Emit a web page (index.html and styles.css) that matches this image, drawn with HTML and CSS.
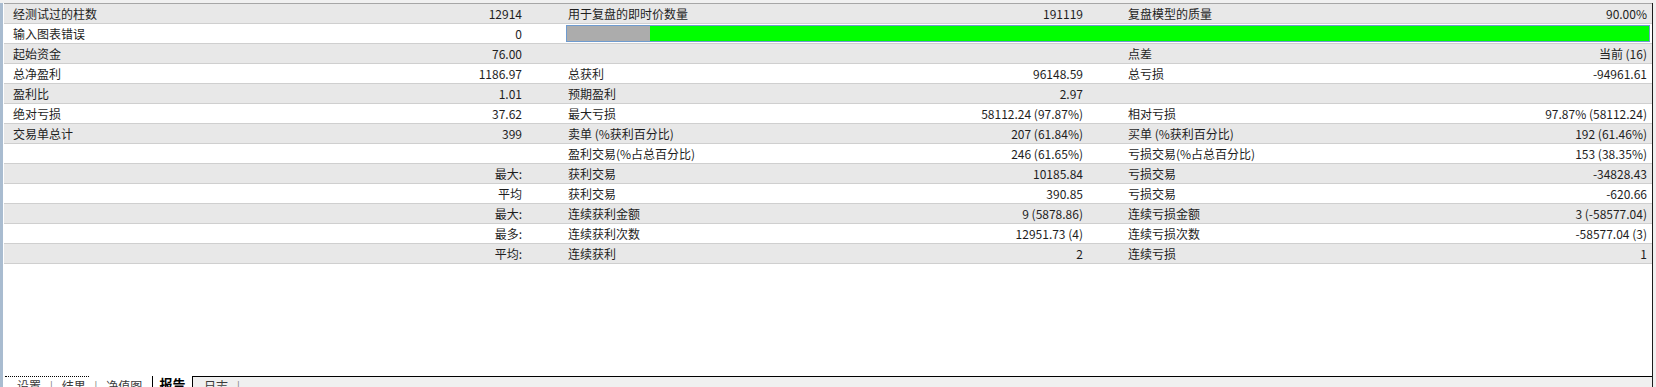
FILE: index.html
```html
<!DOCTYPE html>
<html lang="zh-CN">
<head>
<meta charset="utf-8">
<title>报告</title>
<link rel="stylesheet" href="styles.css">
</head>
<body>
<div class="window">
  <div class="side"></div>
  <div class="panel">
    <div class="report">
      <div class="row">
        <div class="cell c1"><span>经测试过的柱数</span><span>12914</span></div>
        <div class="cell c2"><span>用于复盘的即时价数量</span><span>191119</span></div>
        <div class="cell c3"><span>复盘模型的质量</span><span>90.00%</span></div>
      </div>
      <div class="row">
        <div class="cell c1"><span>输入图表错误</span><span>0</span></div>
        <div class="barcell">
          <div class="bar"><div class="bar-na" style="width:7.7%"></div><div class="bar-ok"></div></div>
        </div>
      </div>
      <div class="row">
        <div class="cell c1"><span>起始资金</span><span>76.00</span></div>
        <div class="cell c2"><span></span><span></span></div>
        <div class="cell c3"><span>点差</span><span>当前 (16)</span></div>
      </div>
      <div class="row">
        <div class="cell c1"><span>总净盈利</span><span>1186.97</span></div>
        <div class="cell c2"><span>总获利</span><span>96148.59</span></div>
        <div class="cell c3"><span>总亏损</span><span>-94961.61</span></div>
      </div>
      <div class="row">
        <div class="cell c1"><span>盈利比</span><span>1.01</span></div>
        <div class="cell c2"><span>预期盈利</span><span>2.97</span></div>
        <div class="cell c3"><span></span><span></span></div>
      </div>
      <div class="row">
        <div class="cell c1"><span>绝对亏损</span><span>37.62</span></div>
        <div class="cell c2"><span>最大亏损</span><span>58112.24 (97.87%)</span></div>
        <div class="cell c3"><span>相对亏损</span><span>97.87% (58112.24)</span></div>
      </div>
      <div class="row">
        <div class="cell c1"><span>交易单总计</span><span>399</span></div>
        <div class="cell c2"><span>卖单 (%获利百分比)</span><span>207 (61.84%)</span></div>
        <div class="cell c3"><span>买单 (%获利百分比)</span><span>192 (61.46%)</span></div>
      </div>
      <div class="row">
        <div class="cell c1"><span></span><span></span></div>
        <div class="cell c2"><span>盈利交易(%占总百分比)</span><span>246 (61.65%)</span></div>
        <div class="cell c3"><span>亏损交易(%占总百分比)</span><span>153 (38.35%)</span></div>
      </div>
      <div class="row">
        <div class="cell c1"><span></span><span>最大:</span></div>
        <div class="cell c2"><span>获利交易</span><span>10185.84</span></div>
        <div class="cell c3"><span>亏损交易</span><span>-34828.43</span></div>
      </div>
      <div class="row">
        <div class="cell c1"><span></span><span>平均</span></div>
        <div class="cell c2"><span>获利交易</span><span>390.85</span></div>
        <div class="cell c3"><span>亏损交易</span><span>-620.66</span></div>
      </div>
      <div class="row">
        <div class="cell c1"><span></span><span>最大:</span></div>
        <div class="cell c2"><span>连续获利金额</span><span>9 (5878.86)</span></div>
        <div class="cell c3"><span>连续亏损金额</span><span>3 (-58577.04)</span></div>
      </div>
      <div class="row">
        <div class="cell c1"><span></span><span>最多:</span></div>
        <div class="cell c2"><span>连续获利次数</span><span>12951.73 (4)</span></div>
        <div class="cell c3"><span>连续亏损次数</span><span>-58577.04 (3)</span></div>
      </div>
      <div class="row">
        <div class="cell c1"><span></span><span>平均:</span></div>
        <div class="cell c2"><span>连续获利</span><span>2</span></div>
        <div class="cell c3"><span>连续亏损</span><span>1</span></div>
      </div>
    </div>
    <div class="empty"></div>
    <div class="tabs">
      <div class="tabs-left">
        <div class="focus-line"></div>
        <div class="tab-text">设置 <span class="sep">|</span> 结果 <span class="sep">|</span> 净值图</div>
      </div>
      <div class="tab-active">报告</div>
      <div class="tabs-right"><span class="tab-text">日志 <span class="sep">|</span></span></div>
    </div>
  </div>
  <div class="edge"></div>
</div>
</body>
</html>
```
FILE: styles.css
```css
html, body {
  margin: 0;
  padding: 0;
}
body {
  width: 1656px;
  height: 387px;
  overflow: hidden;
  background: #f0f0f0;
  font-family: "Noto Sans CJK SC", "Liberation Sans", sans-serif;
  font-size: 12px;
  color: #1e1e1e;
}
.window {
  display: flex;
  height: 387px;
}
.side {
  width: 3px;
  margin-top: 3px;
  background: #a9bcd0;
  border-right: 1px solid #ffffff;
}
.panel {
  width: 1648px;
  margin-top: 3px;
  border-top: 1px solid #a6a6a6;
  display: flex;
  flex-direction: column;
  background: #ffffff;
  overflow: hidden;
}
.edge {
  width: 1px;
  margin-top: 3px;
  background: #1c1c1c;
}
.report {
  display: flex;
  flex-direction: column;
  flex-shrink: 0;
}
.row {
  display: grid;
  grid-template-columns: 523px 561px 564px;
  height: 19px;
  border-bottom: 1px solid #cfcfcf;
  background: #ffffff;
}
.row:nth-child(odd) {
  background: #e8e8e8;
}
.cell {
  display: flex;
  justify-content: space-between;
  align-items: center;
  padding-right: 5px;
  line-height: 19px;
  white-space: nowrap;
}
.c1 { padding-left: 9px; }
.c2 { padding-left: 41px; }
.c3 { padding-left: 40px; }
.barcell {
  grid-column: 2 / 4;
  display: flex;
  align-items: flex-start;
  padding: 1px 2px 0 39px;
}
.bar {
  flex: 1;
  height: 15px;
  border: 1px solid #6f9bcf;
  display: flex;
}
.bar-na {
  background: #acacac;
}
.bar-ok {
  flex: 1;
  background: #00ff00;
}
.empty {
  height: 112px;
  flex-shrink: 0;
  background: #ffffff;
}
.tabs {
  flex: 1;
  min-height: 0;
  display: flex;
  background: #f0f0f0;
}
.tabs-left {
  width: 148px;
  flex-shrink: 0;
  background: #ffffff;
  display: flex;
  flex-direction: column;
}
.focus-line {
  width: 84px;
  margin-left: 1px;
  border-top: 1px dotted #000000;
}
.tab-text {
  color: #3a3a3a;
  line-height: 14px;
  padding-top: 2px;
  padding-left: 13px;
  word-spacing: 6px;
  white-space: nowrap;
}
.sep {
  color: #8a8a8a;
}
.tab-active {
  width: 39px;
  flex-shrink: 0;
  border-left: 1px solid #000000;
  border-right: 1px solid #000000;
  background: #ffffff;
  color: #000000;
  font-weight: bold;
  font-size: 13px;
  line-height: 14px;
  padding-top: 1px;
  text-align: center;
}
.tabs-right {
  flex: 1;
  border-top: 1px solid #000000;
}
.tabs-right .tab-text {
  display: block;
  padding-top: 2px;
  padding-left: 11px;
}
```
